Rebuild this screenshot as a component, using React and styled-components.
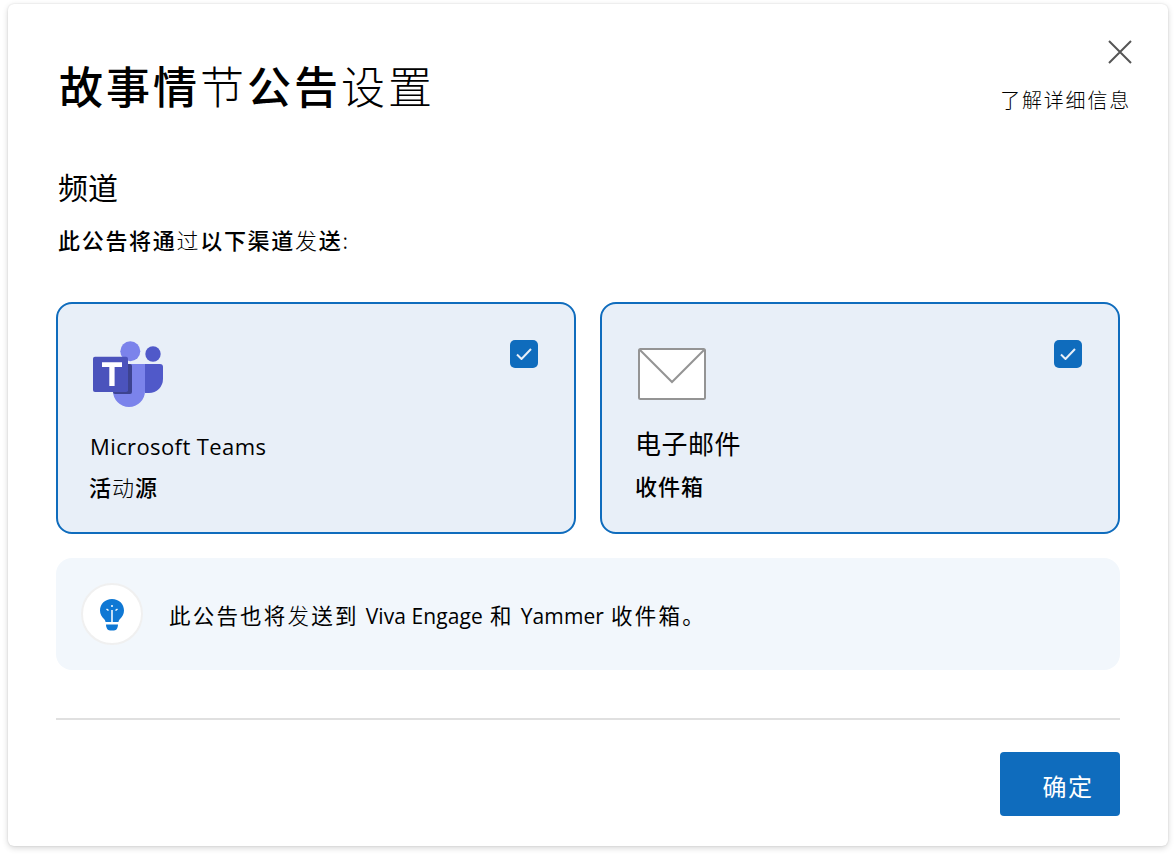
import React from "react";
import styled, { createGlobalStyle } from "styled-components";

const Global = createGlobalStyle`
  html, body { margin: 0; padding: 0; background: #fff; }
  body { font-family: "Noto Sans CJK SC", "Noto Sans", sans-serif; color: #000; }
`;
const Page = styled.div`
  width: 1176px; height: 858px; box-sizing: border-box; padding: 4px 8px 12px; overflow: hidden;
`;
const Dialog = styled.div`
  position: relative; box-sizing: border-box; width: 1160px; height: 842px; padding: 45px 48px 30px;
  background: #fff; border-radius: 6px;
  box-shadow: 0 0 2px rgba(0,0,0,.12), 0 2px 6px rgba(0,0,0,.16);
  display: flex; flex-direction: column;
`;
const Close = styled.button`
  position: absolute; top: 36px; right: 36px; width: 24px; height: 24px; padding: 0; border: 0; background: none;
  svg { display: block; }
`;
const Head = styled.div`
  display: flex; justify-content: space-between; align-items: flex-end; height: 72px;
`;
const Title = styled.h1`
  margin: 0 0 0 3px; font-size: 44px; line-height: 72px; font-weight: 500; letter-spacing: 3px;
`;
const Thin = styled.span`font-weight: 300;`;
const Learn = styled.a`
  font-size: 20px; line-height: 28px; letter-spacing: 1.8px; margin: 0 -11px 7px 0; font-weight: 300;
`;
const SectionTitle = styled.h2`
  margin: 45px 0 0 2px; font-size: 30px; line-height: 40px; font-weight: 400;
`;
const Lead = styled.p`
  margin: 17px 0 0 2px; font-size: 22px; line-height: 32px; letter-spacing: 1.7px; font-weight: 500;
`;
const Cards = styled.div`
  display: grid; grid-template-columns: 520px 520px; gap: 24px; margin-top: 47px;
`;
const Card = styled.div`
  position: relative; box-sizing: border-box; height: 232px; padding: ${p => p.$pad};
  background: #e8eff8; border: 2px solid #0f6cbd; border-radius: 16px;
`;
const Check = styled.span`
  position: absolute; top: 36px; right: 36px; width: 28px; height: 28px; border-radius: 5px; background: #0f6cbd;
  display: flex; align-items: center; justify-content: center;
`;
const IconSlot = styled.div`
  height: 70px; padding-left: ${p => p.$inset}; svg { display: block; }
`;
const CardName = styled.div`
  font-size: ${p => p.$size}; line-height: 34px; margin: ${p => p.$m}; font-weight: 400;
  font-family: ${p => p.$latin ? '"Open Sans", "Noto Sans", sans-serif' : 'inherit'};
  letter-spacing: ${p => p.$latin ? '.4px' : '.5px'};
`;
const CardSub = styled.div`
  font-size: 22px; line-height: 32px; margin: ${p => p.$m}; font-weight: 500; letter-spacing: 1px;
`;
const Tip = styled.div`
  display: flex; align-items: center; gap: 26px; height: 112px; margin-top: 24px; padding-left: 25px; box-sizing: border-box;
  background: #f2f7fc; border-radius: 16px; font-size: 21.5px; letter-spacing: 2.2px;
`;
const Latin = styled.span`
  font-family: "Open Sans", "Noto Sans", sans-serif; font-size: 21px; letter-spacing: .1px;
`;
const Bulb = styled.span`
  width: 62px; height: 62px; box-sizing: border-box; border: 2px solid #f0f0f0; border-radius: 50%; background: #fff;
  display: flex; align-items: center; justify-content: center; flex: none;
`;
const Divider = styled.hr`
  margin: 48px 0 0; border: 0; height: 2px; background: #e0e0e0;
`;
const Footer = styled.div`
  display: flex; justify-content: flex-end; margin-top: 32px;
`;
const Ok = styled.button`
  width: 120px; height: 64px; padding: 2px 0 0 16px; border: 0; border-radius: 4px; background: #0f6cbd; color: #fff;
  font: 400 24px "Noto Sans CJK SC", sans-serif; letter-spacing: 1.5px;
`;

const Tick = () => (
  <svg width="16" height="12" viewBox="0 0 16 12" fill="none"><path d="M1 6.5 5.5 11 15 1" stroke="#e8eff8" strokeWidth="2" /></svg>
);
const TeamsIcon = () => (
  <svg width="72" height="70" viewBox="92 340 72 70">
    <circle cx="153" cy="354" r="7.7" fill="#5059c9" />
    <path d="M145 364h15a3 3 0 0 1 3 3v12a14 14 0 0 1-14 14h-4z" fill="#5059c9" />
    <circle cx="130.3" cy="351.3" r="10" fill="#7b83eb" />
    <path d="M115 364h30v27a16 16 0 0 1-32 0v-24a3 3 0 0 1 3-3z" fill="#7b83eb" />
    <rect x="113" y="364" width="19" height="30" rx="2" fill="#3d4390" />
    <path d="M113 360h15v31h-15z" fill="#4b53bc" />
    <rect x="93" y="356.7" width="35" height="35.3" rx="2" fill="#4b53bc" />
    <path d="M102 362.3h20v4.7h-7.4v19h-5.3v-19H102z" fill="#fff" />
  </svg>
);
const MailIcon = () => (
  <svg width="70" height="54" viewBox="637 347 70 54" fill="none">
    <rect x="639" y="349" width="66" height="50" rx="1.5" fill="#fff" stroke="#949494" strokeWidth="2" />
    <path d="M640 350 672 382 704 350" stroke="#949494" strokeWidth="2" />
  </svg>
);
const BulbIcon = () => (
  <svg width="26" height="33" viewBox="0 0 26 33">
    <path d="M13 1C6 1 1 6 1 12.500c0 3.600 1.700 6.300 4 8.500 1 1 1.400 2 1.500 3h13c.1-1 .5-2 1.500-3 2.300-2.200 4-4.900 4-8.500C25 6 20 1 13 1z" fill="#0f78d4" />
    <path d="M7 26.500h12c0 3-1.500 6-4 6h-4c-2.500 0-4-3-4-6z" fill="#0f78d4" />
    <path d="M13 7v2M13 12v12M7.500 11 9.500 12.500M18.500 11 16.500 12.500" stroke="#fff" strokeWidth="1.500" fill="none" />
  </svg>
);

export default function App() {
  return (
    <Page>
      <Global />
      <Dialog>
        <Close aria-label="关闭">
          <svg width="24" height="24" viewBox="0 0 24 24"><path d="M1 1 23 23M23 1 1 23" stroke="#555" strokeWidth="2" /></svg>
        </Close>
        <Head>
          <Title>故事情<Thin>节</Thin>公告<Thin>设置</Thin></Title>
          <Learn>了解详细信息</Learn>
        </Head>
        <SectionTitle>频道</SectionTitle>
        <Lead>此公告将通<Thin>过</Thin>以下渠道<Thin>发</Thin>送<Thin>:</Thin></Lead>
        <Cards>
          <Card $pad="36px 32px 0">
            <Check><Tick /></Check>
            <IconSlot $inset="2px"><TeamsIcon /></IconSlot>
            <CardName $latin $size="22px" $m="19px 0 0 0">Microsoft Teams</CardName>
            <CardSub $m="7px 0 0 -1px">活<Thin>动</Thin>源</CardSub>
          </Card>
          <Card $pad="43px 32px 0">
            <Check><Tick /></Check>
            <IconSlot $inset="3px"><MailIcon /></IconSlot>
            <CardName $size="26px" $m="9px 0 0 1px">电子邮件</CardName>
            <CardSub $m="9px 0 0 1px">收件箱</CardSub>
          </Card>
        </Cards>
        <Tip>
          <Bulb><BulbIcon /></Bulb>
          <span>此公告也将<Thin>发</Thin>送到 <Latin>Viva Engage</Latin> 和 <Latin>Yammer</Latin> 收件箱。</span>
        </Tip>
        <Divider />
        <Footer><Ok>确定</Ok></Footer>
      </Dialog>
    </Page>
  );
}
